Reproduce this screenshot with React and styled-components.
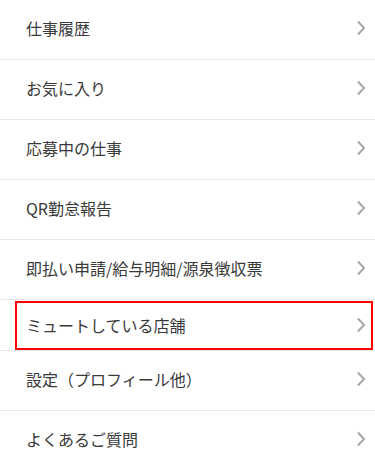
import React from "react";
import styled, { createGlobalStyle } from "styled-components";

const Global = createGlobalStyle`
  html, body { margin: 0; padding: 0; background: #fff; }
  body { font-family: "Noto Sans CJK JP", "Noto Sans", sans-serif; }
`;

const List = styled.ul`
  list-style: none;
  margin: 0;
  padding: 0;
  background: #fff;
`;

const Row = styled.li`
  position: relative;
  box-sizing: border-box;
  height: ${(p) => (p.$highlighted ? 51 : 60)}px;
  border-bottom: 1px solid #e6e6e6;
  display: flex;
  align-items: center;
  justify-content: space-between;
  padding: 0 9px ${(p) => (p.$highlighted ? 0 : 3)}px 26px;
  color: #3a3a3a;
  font-size: 16px;
  line-height: 1;
  ${(p) =>
    p.$highlighted &&
    `
    &::after {
      content: "";
      position: absolute;
      left: 15px;
      right: 2px;
      top: 1px;
      bottom: 0px;
      border: 2px solid #ff0000;
      pointer-events: none;
    }
  `}
`;

const Label = styled.span`
  letter-spacing: 0;
`;

const Chevron = styled.svg`
  width: 10px;
  height: 16px;
  flex: none;
`;

const items = [
  "仕事履歴",
  "お気に入り",
  "応募中の仕事",
  "QR勤怠報告",
  "即払い申請/給与明細/源泉徴収票",
  "ミュートしている店舗",
  "設定（プロフィール他）",
  "よくあるご質問",
];

export default function App() {
  return (
    <>
      <Global />
      <List>
        {items.map((t) => (
          <Row key={t} $highlighted={t === "ミュートしている店舗"}>
            <Label>{t}</Label>
            <Chevron viewBox="0 0 10 16">
              <path
                d="M2 1.5 L8 8 L2 14.5"
                fill="none"
                stroke="#a8a8a8"
                strokeWidth="2"
              />
            </Chevron>
          </Row>
        ))}
      </List>
    </>
  );
}
